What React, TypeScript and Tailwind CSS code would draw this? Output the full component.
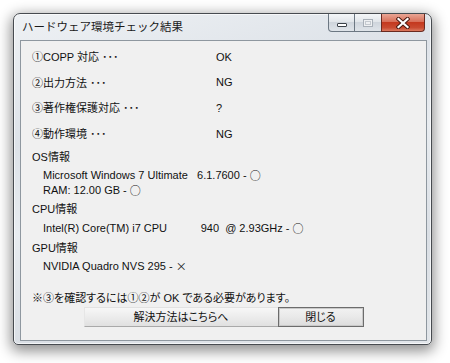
import React from "react";

const Dots = () => (
  <span className="font-['Noto_Sans_CJK_JP',sans-serif]">･･･</span>
);

const J = ({ children }: { children: React.ReactNode }) => (
  <span className="font-['Noto_Sans_CJK_JP',sans-serif] [font-feature-settings:normal]">{children}</span>
);

function Row({ label, value, h }: { label: string; value: string; h: string }) {
  return (
    <div className={`flex items-center ${h}`}>
      <div className="w-[184px] whitespace-pre">
        {label} <Dots />
      </div>
      <div>{value}</div>
    </div>
  );
}

export default function App() {
  return (
    <div className="w-[450px] h-[363px] bg-white pl-[13px] pt-[13px] font-['Liberation_Sans','Noto_Sans_CJK_JP',sans-serif] text-[11px] text-[#111] [font-feature-settings:'palt']">
      <div className="w-[419px] h-[332px] flex flex-col rounded-t-[7px] rounded-b-[5px] border border-[#474b50] bg-[linear-gradient(165deg,#eef1f4_0%,#dde2e8_30%,#e8ecf0_50%,#dadfe5_75%,#e2e6ea_100%)] shadow-[0_4px_14px_2px_rgba(0,0,0,0.45),inset_0_0_0_1px_rgba(255,255,255,0.65)]">
        {/* title bar */}
        <div className="h-[26px] flex items-start justify-between pl-[8px] pr-[6px]">
          <div className="h-[26px] flex items-center text-[11.5px] text-[#1b1b1b] [font-feature-settings:normal] font-['Noto_Sans_CJK_JP',sans-serif]">
            ハードウェア環境チェック結果
          </div>
          <div className="flex h-[18px]">
            <div className="w-[27px] h-[18px] rounded-bl-[4px] border border-t-0 border-[#6c7782] bg-[linear-gradient(#f4f6f8,#e2e6ea_45%,#cfd5dc_50%,#dfe4e9)] flex items-end justify-center pb-[4px]">
              <div className="w-[10px] h-[4px] bg-white border border-[#3b4148] rounded-[1px]" />
            </div>
            <div className="w-[26px] h-[18px] border-b border-[#6c7782] bg-[linear-gradient(#f4f6f8,#e2e6ea_45%,#cfd5dc_50%,#dfe4e9)] flex items-center justify-center">
              <div className="w-[10px] h-[8px] border border-[#a9b0b8] bg-[#eef0f2] flex items-center justify-center">
                <div className="w-[6px] h-[4px] border border-[#c4c9cf]" />
              </div>
            </div>
            <div className="w-[44px] h-[18px] rounded-br-[4px] border border-t-0 border-[#6a2a20] bg-[linear-gradient(#e9a594,#d8705a_45%,#c4391f_50%,#c94a30_80%,#dc7a60)] flex items-center justify-center">
              <svg width="14" height="12" viewBox="0 0 14 12">
                <path d="M2.5 2 L11.5 10 M11.5 2 L2.5 10" stroke="#4a1a12" strokeWidth="4.2" strokeLinecap="square" />
                <path d="M2.5 2 L11.5 10 M11.5 2 L2.5 10" stroke="#ffffff" strokeWidth="2.2" strokeLinecap="square" />
              </svg>
            </div>
          </div>
        </div>
        {/* body */}
        <div className="flex-1 pl-[6px] pr-[4px] pb-[3px] flex">
          <div className="flex-1 border border-[#8e979f] bg-[#f0f0f0] pl-[11px] pt-[3px] flex flex-col">
            <Row label="①COPP 対応" value="OK" h="h-[26px]" />
            <Row label="②出力方法" value="NG" h="h-[25px]" />
            <Row label="③著作権保護対応" value="?" h="h-[26px]" />
            <Row label="④動作環境" value="NG" h="h-[26px]" />
            <div className="h-[20px] flex items-center">OS情報</div>
            <div className="h-[16px] flex items-center pl-[11px] whitespace-pre">Microsoft Windows 7 Ultimate   6.1.7600 - <J>○</J></div>
            <div className="h-[15px] flex items-center pl-[11px] whitespace-pre">RAM: 12.00 GB - <J>○</J></div>
            <div className="h-[22px] flex items-center">CPU情報</div>
            <div className="h-[17px] flex items-center pl-[11px] whitespace-pre">Intel(R) Core(TM) i7 CPU           940  @ 2.93GHz - <J>○</J></div>
            <div className="h-[22px] flex items-center">GPU情報</div>
            <div className="h-[15px] flex items-center pl-[11px] whitespace-pre">NVIDIA Quadro NVS 295 - <J>×</J></div>
            <div className="h-[15px]" />
            <div className="h-[18px] flex items-center">※③を確認するには①②が OK である必要があります。</div>
            <div className="flex justify-center pr-[11px] h-[20px]">
              <div className="w-[194px] h-[20px] flex items-center justify-center border-t border-l border-t-[#e2e2e2] border-l-[#e6e6e6] border-b border-b-[#a9a9a9] bg-[linear-gradient(#f7f7f7,#ececec_50%,#e0e0e0)]">
                解決方法はこちらへ
              </div>
              <div className="w-[86px] h-[20px] flex items-center justify-center border border-[#6c6c6c] shadow-[inset_0_0_0_1px_#c9c9c9] bg-[linear-gradient(#f2f2f2,#e9e9e9_50%,#dcdcdc)]">
                閉じる
              </div>
            </div>
          </div>
        </div>
      </div>
    </div>
  );
}
